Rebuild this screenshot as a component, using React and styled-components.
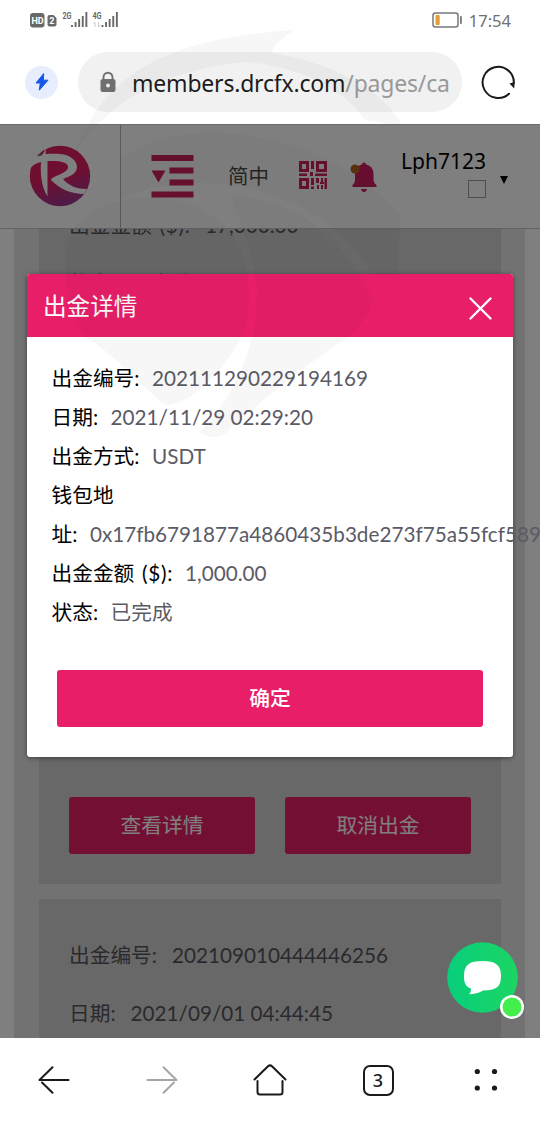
import styled, { createGlobalStyle } from "styled-components";

const GlobalStyle = createGlobalStyle`
  * {
    box-sizing: border-box;
  }
  body {
    margin: 0;
    background-color: #fff;
    font-family: Lato, "Noto Sans CJK SC", sans-serif;
    font-variant-ligatures: none;
  }
  svg {
    display: block;
    flex-shrink: 0;
  }
`;

const Screen = styled.div`
  position: relative;
  display: flex;
  flex-direction: column;
  width: 540px;
  height: 1122px;
  overflow: hidden;
  background-color: #fff;
`;

//STATUS BAR
const StatusBar = styled.div`
  display: flex;
  align-items: center;
  justify-content: space-between;
  height: 40px;
  padding: 0 29px 0 29px;
`;
const StatusGroup = styled.div`
  display: flex;
  align-items: center;
  gap: 6px;
`;
const Clock = styled.span`
  font-family: "Noto Sans", sans-serif;
  font-size: 16.5px;
  line-height: 20px;
  color: #707070;
  padding-top: 1px;
`;

//ADDRESS BAR
const AddressBar = styled.div`
  display: flex;
  align-items: center;
  height: 84px;
  padding: 0 24px 0 25px;
`;
const Boost = styled.div`
  display: flex;
  align-items: center;
  justify-content: center;
  width: 33px;
  height: 33px;
  border-radius: 50%;
  background-color: #e6edfd;
`;
const UrlField = styled.div`
  display: flex;
  align-items: center;
  width: 384px;
  height: 60px;
  margin: 0 18px 0 20px;
  padding: 0 12px 0 22px;
  border-radius: 30px;
  background-color: #f1f1f1;
`;
const Url = styled.div`
  flex: 1;
  margin-left: 16px;
  padding-top: 2px;
  overflow: hidden;
  white-space: nowrap;
  font-family: "Noto Sans", sans-serif;
  font-size: 23px;
  line-height: 32px;
  letter-spacing: -0.2px;
  color: #1c1c1c;
`;
const UrlPath = styled.span`
  color: #999;
`;

//WEB PAGE
const Viewport = styled.div`
  position: relative;
  display: flex;
  flex-direction: column;
  height: 914px;
  overflow: hidden;
  background-color: #fff;
`;
const SiteHeader = styled.header`
  display: flex;
  flex-shrink: 0;
  height: 105px;
  border-top: 1px solid #d8d8d8;
  border-bottom: 1px solid #c4c4c4;
`;
const LogoCell = styled.div`
  display: flex;
  align-items: center;
  justify-content: center;
  width: 121px;
  padding-bottom: 2px;
  border-right: 1px solid #b4b4b4;
`;
const Tools = styled.div`
  flex: 1;
  display: flex;
  align-items: center;
  padding: 0 28px 0 30px;
`;
const Language = styled.span`
  margin: -2px 30px 0 34px;
  font-size: 20.5px;
  line-height: 30px;
  color: #484848;
`;
const QrWrap = styled.div`
  margin-top: -4px;
`;
const BellWrap = styled.div`
  margin-left: 23px;
`;
const Account = styled.div`
  display: flex;
  flex-direction: column;
  align-items: flex-end;
  width: 86px;
  margin: -8px 0 0 23px;
`;
const UserName = styled.span`
  font-family: "Noto Sans", sans-serif;
  font-size: 21px;
  line-height: 28px;
  white-space: nowrap;
  color: #000;
`;
const Avatar = styled.div`
  width: 18px;
  height: 18px;
  margin-top: 5px;
  border: 1px solid #9c9c9c;
`;
const Content = styled.main`
  flex: 1;
  min-height: 0;
  margin: 0 15px 0 14px;
  padding: 0 24px 0 25px;
  overflow: hidden;
  background-color: #e4e4e4;
`;
const RecordCard = styled.section`
  display: flex;
  flex-direction: column;
  height: ${(props) => props.height}px;
  margin-top: ${(props) => props.offset}px;
  padding: 27px 30px 30px;
  background-color: #d0d0d0;
`;
const RecordRow = styled.div`
  display: flex;
  gap: 15px;
  font-size: 20.7px;
  line-height: 58px;
  color: #55555c;
`;
const RecordActions = styled.div`
  display: grid;
  grid-template-columns: 1fr 1fr;
  gap: 30px;
  margin-top: auto;
`;
const Button = styled.button`
  height: 57px;
  width: 100%;
  padding: 0 0 4px;
  border: none;
  border-radius: 3px;
  background-color: #e91e68;
  color: #fff;
  font-family: inherit;
  font-size: 20.8px;
  font-weight: ${(props) => (props.$primary ? 500 : 400)};
`;

//DIALOG
const Backdrop = styled.div`
  position: absolute;
  inset: 0;
  padding: 150px 27px 0;
  background-color: rgba(0, 0, 0, 0.5);
`;
const Dialog = styled.div`
  display: flex;
  flex-direction: column;
  height: 483px;
  border-radius: 3px;
  background-color: #fff;
  box-shadow: 0 1px 5px rgba(0, 0, 0, 0.45);
`;
const DialogHeader = styled.div`
  display: flex;
  align-items: center;
  justify-content: space-between;
  height: 63px;
  padding: 0 21px 0 16px;
  border-radius: 3px 3px 0 0;
  background-color: #e91e68;
`;
const DialogTitle = styled.h2`
  margin: 0;
  font-size: 23.6px;
  font-weight: 400;
  line-height: 34px;
  color: #fff;
`;
const CloseButton = styled.span`
  margin-top: 5px;
`;
const DialogBody = styled.div`
  padding: 22px 25px 0 24.5px;
`;
const Detail = styled.p`
  margin: 0;
  font-size: 20.7px;
  line-height: 39px;
  color: #000;
`;
const DetailLabel = styled.span`
  word-spacing: 1.5px;
`;
const Currency = styled.span`
  letter-spacing: 0.8px;
`;
const DetailValue = styled.span`
  margin-left: 12.5px;
  color: #5b5b65;
`;
const DialogFooter = styled.div`
  margin-top: auto;
  padding: 0 30px 30px;
`;

//CHAT WIDGET
const Chat = styled.div`
  position: absolute;
  right: 16px;
  bottom: 19px;
`;

//BROWSER NAVIGATION
const NavBar = styled.nav`
  display: grid;
  grid-template-columns: repeat(5, 1fr);
  place-items: center;
  height: 84px;
  background-color: #fff;
`;
const TabCount = styled.div`
  display: flex;
  align-items: center;
  justify-content: center;
  width: 31px;
  height: 31px;
  border: 2px solid #1a1a1a;
  border-radius: 7px;
  font-family: "Noto Sans", sans-serif;
  font-size: 18px;
  font-weight: 500;
  line-height: 20px;
  color: #1a1a1a;
`;
const Watermark = styled.svg`
  position: absolute;
  top: 0;
  left: 0;
  pointer-events: none;
`;

const current = [
  { label: "出金编号", value: "202111290229194169" },
  { label: "日期", value: "2021/11/29 02:29:20" },
  { label: "出金方式", value: "USDT" },
  { label: "钱包地址", value: "0x17fb6791877a4860435b3de273f75a55fcf589" },
  { label: "出金金额", unit: "($)", value: "1,000.00" },
  { label: "状态", value: "已完成" },
];

const records = [
  {
    height: 715,
    offset: -60,
    rows: [
      { label: "出金金额", unit: "($)", value: "17,000.00" },
      { label: "状态", value: "已完成" },
    ],
  },
  {
    height: 500,
    offset: 15,
    rows: [
      { label: "出金编号", value: "202109010444446256" },
      { label: "日期", value: "2021/09/01 04:44:45" },
    ],
  },
];

const Bars = ({ x }) => (
  <g fill="#686868">
    {[2, 5, 8, 11, 15].map((h, i) => (
      <rect key={h} x={x + i * 3.6} y={17 - h} width="1.9" height={h} />
    ))}
  </g>
);

const SignalIcons = () => (
  <svg width="92" height="20" viewBox="0 0 92 20" fontFamily="Roboto, sans-serif">
    <rect x="1" y="3" width="14.5" height="14.5" rx="3" fill="#686868" />
    <text x="2.4" y="13.7" fontSize="9" fontWeight="700" fill="#fff">
      HD
    </text>
    <path d="M20.5 5h4l3 3v6.5q0 2-2 2h-5q-2 0-2-2v-7.5q0-2 2-2z" fill="#686868" />
    <text x="20.2" y="14.2" fontSize="9" fontWeight="700" fill="#fff">
      2
    </text>
    <text x="33.5" y="9" fontSize="9" fontWeight="700" fill="#686868" textLength="9" lengthAdjust="spacingAndGlyphs">
      2G
    </text>
    <Bars x={42} />
    <text x="63.5" y="9" fontSize="9" fontWeight="700" fill="#686868" textLength="9" lengthAdjust="spacingAndGlyphs">
      4G
    </text>
    <path d="M66 12v5m-1.5-3.5l1.5-1.5M69.5 12v5m1.5-1.5l-1.5 1.5" stroke="#ccc" fill="none" />
    <Bars x={72.5} />
  </svg>
);

const BatteryIcon = () => (
  <svg width="31" height="16" viewBox="0 0 31 16">
    <rect x="1" y="1" width="25" height="14" rx="2.5" fill="none" stroke="#777" strokeWidth="1.5" />
    <rect x="3.5" y="3" width="4.2" height="10" rx="1" fill="#e89c35" />
    <rect x="28" y="4" width="1.8" height="8" rx="0.8" fill="#777" />
  </svg>
);

const BoltIcon = () => (
  <svg width="14" height="18" viewBox="0 0 14 18">
    <path d="M8.7 0.5L1 10h4.3L4.3 17.2 13 7.2H8.4z" fill="#1557e6" stroke="#1557e6" strokeLinejoin="round" />
  </svg>
);

const LockIcon = () => (
  <svg width="16" height="22" viewBox="0 0 16 22">
    <path d="M3.5 9V6.2a4.5 4.5 0 0 1 9 0V9" fill="none" stroke="#707070" strokeWidth="1.9" />
    <rect x="0.5" y="8" width="15" height="13" rx="2.2" fill="#707070" />
    <circle cx="8" cy="14.5" r="1.9" fill="#f1f1f1" />
  </svg>
);

const ReloadIcon = () => (
  <svg width="36" height="36" viewBox="0 0 36 36">
    <path
      d="M29 29.7A15.6 15.6 0 1 1 33.8 19"
      fill="none"
      stroke="#1a1a1a"
      strokeWidth="2"
      strokeLinecap="round"
    />
    <path d="M29.5 19.5l5.2-1.5-0.5 6.500z" fill="#1a1a1a" />
  </svg>
);

const Logo = () => (
  <svg width="62" height="62" viewBox="0 0 62 62">
    <defs>
      <linearGradient id="logo" x1="0.35" y1="0" x2="0.65" y2="1">
        <stop offset="0.5" stopColor="#dc1e62" />
        <stop offset="1" stopColor="#963a94" />
      </linearGradient>
    </defs>
    <circle cx="31" cy="31" r="30.2" fill="url(#logo)" />
    <path
      d="M1 16C8 9 20 8 31 9C42 10 48 16 48 22C48 28 42 31 34 34C40 41 48 44 58 44L55 49C42 49 31 44 22 35C24 30 39 29 39 22C39 17 31 15.5 18.5 16L18.500 51.5C13 43 11 30 12 17C7 18 4 20 1.5 23z"
      fill="#fff"
    />
    <path d="M8 11l6.500-6-2 5.500z" fill="#845080" />
    <path d="M10 15L17 4l-1 10z" fill="#fff" />
  </svg>
);

const MenuIcon = () => (
  <svg width="43" height="43" viewBox="0 0 43 43" fill="#d01e5a">
    <path d="M0.5 0h42v6h-42zM18.5 12.5h24v6h-24zM18.5 24.5h24v6h-24zM0.5 36.5h42v6h-42zM0.5 15.5h14l-7 12z" />
  </svg>
);

const QrIcon = () => (
  <svg width="28" height="28" viewBox="0 0 28 28" fill="#d01e5c">
    <path
      fillRule="evenodd"
      d="M0 0h10v11H0zM3 3v5h4V3zM17 0h11v11H17zM20 3v5h5V3zM0 17h10v11H0zM3 20v5h4v-5z"
    />
    <path d="M12 0h3v8h-3zM0 12.5h8v2.5H0zM11 11h3v4h-3zM16 12.5h12v2.5H16zM12 17h3v7h-3zM12 25.5h3V28h-3zM17 17h3v5h-3zM18 24h2v4h-2zM22 17h2v5h-2zM21 21h4v2h-4zM22 24h2v4h-2zM25.5 17H28v11h-2.5z" />
  </svg>
);

const BellIcon = () => (
  <svg width="27" height="32" viewBox="0 0 27 32">
    <path
      d="M14 1.5q2 0 2 2C21 4.5 23.5 8 23.5 13v6q0 3 3 5v2h-24v-2q2.5-2 2.5-5v-6C5 8 7.5 4.5 12 3.5q0-2 2-2z"
      fill="#cf1d60"
    />
    <path d="M11 28h6q-0.5 3-3 3t-3-3z" fill="#cf1d60" />
    <circle cx="5" cy="8" r="4.5" fill="#b4601e" />
  </svg>
);

const Caret = styled.span`
  width: 0;
  height: 0;
  margin: 6px 0 0 14px;
  border: 4.5px solid transparent;
  border-top: 8px solid #000;
  border-bottom: none;
`;

const CloseIcon = () => (
  <svg width="23" height="23" viewBox="0 0 23 23">
    <path d="M1.5 1.5l20 20M21.5 1.5l-20 20" stroke="#fff" strokeWidth="2.3" strokeLinecap="round" />
  </svg>
);

const ChatIcon = () => (
  <svg width="77" height="77" viewBox="0 0 77 77">
    <defs>
      <linearGradient id="chat" x1="0" y1="0" x2="1" y2="0">
        <stop offset="0" stopColor="#08ce7c" />
        <stop offset="1" stopColor="#1cd563" />
      </linearGradient>
    </defs>
    <circle cx="35.5" cy="35.5" r="35.3" fill="url(#chat)" />
    <path
      d="M35.5 19C49 19 54 23 54 34S49 48.5 36 48.5C32 51 27 52.3 22 52.3Q24.5 50 24 46.5C18.5 44.5 17 41 17 34C17 23 22 19 35.5 19z"
      fill="#fff"
    />
    <circle cx="65" cy="65" r="12" fill="#fff" />
    <circle cx="65" cy="65" r="9.5" fill="#43ef4d" />
  </svg>
);

const ArrowIcon = ({ forward }) => (
  <svg width="32" height="28" viewBox="0 0 32 28">
    <path
      d={forward ? "M1.5 14H30M17.5 1.3L30.5 14M17.5 26.7L28 16.5" : "M30.5 14H2M14.5 1.3L1.5 14M14.5 26.7L4 16.5"}
      fill="none"
      stroke={forward ? "#a5a5a5" : "#1a1a1a"}
      strokeWidth="2"
      strokeLinecap="round"
      strokeLinejoin="round"
    />
  </svg>
);

const HomeIcon = () => (
  <svg width="34" height="32" viewBox="0 0 34 32">
    <path
      d="M1.5 15.5L15 2.3q2-1.8 4 0L32.5 15.5M4.5 17v11q0 2.5 2.5 2.5h20q2.5 0 2.5-2.5V17"
      fill="none"
      stroke="#1a1a1a"
      strokeWidth="2"
      strokeLinecap="round"
    />
  </svg>
);

const DotsIcon = () => (
  <svg width="24" height="24" viewBox="0 0 24 24" fill="#1a1a1a">
    <circle cx="3.3" cy="3.5" r="2.6" />
    <circle cx="20.5" cy="3.5" r="2.6" />
    <circle cx="3.3" cy="20" r="2.6" />
    <circle cx="20.5" cy="20" r="2.6" />
  </svg>
);

const Label = ({ label, unit }) => (
  <DetailLabel>
    {label}
    {unit && <Currency> {unit}</Currency>}:
  </DetailLabel>
);

const App = () => (
  <>
    <GlobalStyle />
    <Screen>
      <StatusBar>
        <StatusGroup>
          <SignalIcons />
        </StatusGroup>
        <StatusGroup>
          <BatteryIcon />
          <Clock>17:54</Clock>
        </StatusGroup>
      </StatusBar>

      <AddressBar>
        <Boost>
          <BoltIcon />
        </Boost>
        <UrlField>
          <LockIcon />
          <Url>
            members.drcfx.com<UrlPath>/pages/ca</UrlPath>
          </Url>
        </UrlField>
        <ReloadIcon />
      </AddressBar>

      <Viewport>
        <SiteHeader>
          <LogoCell>
            <Logo />
          </LogoCell>
          <Tools>
            <MenuIcon />
            <Language>简中</Language>
            <QrWrap>
              <QrIcon />
            </QrWrap>
            <BellWrap>
              <BellIcon />
            </BellWrap>
            <Account>
              <UserName>Lph7123</UserName>
              <Avatar />
            </Account>
            <Caret />
          </Tools>
        </SiteHeader>
        <Content>
          {records.map((record) => (
            <RecordCard key={record.height} height={record.height} offset={record.offset}>
              {record.rows.map((row) => (
                <RecordRow key={row.label}>
                  <Label label={row.label} unit={row.unit} />
                  <span>{row.value}</span>
                </RecordRow>
              ))}
              <RecordActions>
                <Button>查看详情</Button>
                <Button>取消出金</Button>
              </RecordActions>
            </RecordCard>
          ))}
        </Content>

        <Backdrop>
          <Dialog>
            <DialogHeader>
              <DialogTitle>出金详情</DialogTitle>
              <CloseButton>
                <CloseIcon />
              </CloseButton>
            </DialogHeader>
            <DialogBody>
              {current.map((item) => (
                <Detail key={item.label}>
                  <Label label={item.label} unit={item.unit} />
                  <DetailValue>{item.value}</DetailValue>
                </Detail>
              ))}
            </DialogBody>
            <DialogFooter>
              <Button $primary>确定</Button>
            </DialogFooter>
          </Dialog>
        </Backdrop>
        <Chat>
          <ChatIcon />
        </Chat>
      </Viewport>

      <NavBar>
        <ArrowIcon />
        <ArrowIcon forward />
        <HomeIcon />
        <TabCount>3</TabCount>
        <DotsIcon />
      </NavBar>

      <Watermark width="540" height="450" viewBox="0 0 540 450" fill="rgba(40, 40, 60, 0.04)">
        <path d="M76 150C105 75 165 38 295 30C282 38 274 44 272 53C330 62 385 90 402 126C385 124 375 121 365 120C345 90 300 66 245 62C170 70 115 95 76 150z" />
        <path d="M120 160C180 110 330 130 400 215L398 275L373 275C350 235 310 205 270 195C230 178 160 178 120 200z" />
        <path d="M76 225C120 185 190 190 230 230C252 260 255 310 240 340C220 375 190 405 165 405C140 385 110 350 85 337C60 300 60 250 76 225z" />
        <path d="M230 195C300 200 345 240 373 300C365 325 350 337 340 342C300 370 255 405 225 434Q212 441 200 432C235 395 258 345 257 290C252 250 240 220 230 195z" />
      </Watermark>
    </Screen>
  </>
);

export default App;
